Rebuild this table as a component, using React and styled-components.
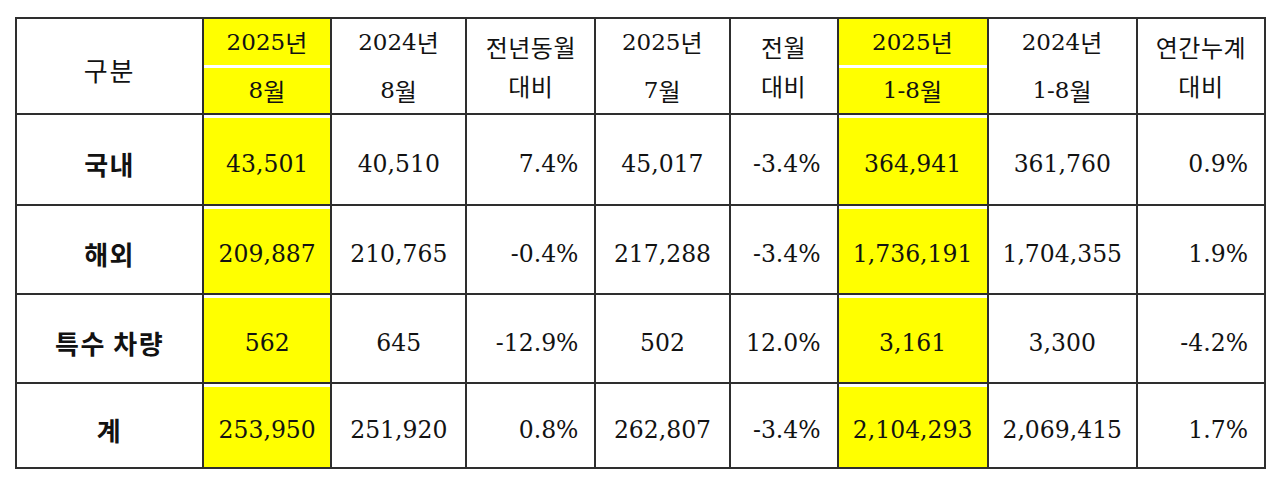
import React from 'react';
import styled, { createGlobalStyle } from 'styled-components';

const GlobalStyle = createGlobalStyle`
  html, body {
    margin: 0;
    padding: 0;
    background: #fff;
  }
  body {
    font-family: "DejaVu Serif", "Noto Sans CJK KR", serif;
    color: #121212;
  }
`;

const Page = styled.div`
  padding: 17px 0 0 15px;
`;

const Table = styled.table`
  border-collapse: separate;
  border-spacing: 0;
  table-layout: fixed;
  width: 1251px;
  border-top: 2px solid #2e2e2e;
  border-left: 2px solid #2e2e2e;
`;

const Row = styled.tr`
  height: ${(p) => p.$h}px;
`;

const HeadCell = styled.th`
  border-right: 2px solid #2e2e2e;
  border-bottom: 2px solid #2e2e2e;
  padding: 0;
  font-weight: normal;
  font-size: 23px;
  vertical-align: top;
  background: #fff;
`;

const Stack = styled.div`
  display: flex;
  flex-direction: column;
  height: 94px;
  padding: ${(p) => (p.$tight ? '10px 0 10px' : '0')};
  box-sizing: border-box;
`;

const Line = styled.div`
  flex: 1;
  display: flex;
  align-items: center;
  justify-content: center;
  background: ${(p) => (p.$hl ? '#ffff00' : 'transparent')};
  & + & {
    border-top: ${(p) => (p.$hl ? '3px solid #fff' : 'none')};
  }
`;

const Hangul = styled.span`
  font-family: "Noto Sans CJK KR", sans-serif;
  font-size: ${(p) => p.$size || 24}px;
  letter-spacing: ${(p) => p.$gap || 0.5}px;
`;

const Cell = styled.td`
  border-right: 2px solid #2e2e2e;
  border-bottom: 2px solid #2e2e2e;
  padding: ${(p) => (p.$right ? '8px 16px 0 0' : '8px 0 0')};
  text-align: ${(p) => (p.$right ? 'right' : 'center')};
  font-size: 23.5px;
  background: ${(p) => (p.$hl ? '#ffff00' : '#fff')};
  box-shadow: ${(p) => (p.$hl ? 'inset 0 3px 0 #fff' : 'none')};
`;

const Label = styled.td`
  border-right: 2px solid #2e2e2e;
  border-bottom: 2px solid #2e2e2e;
  padding: 8px 0 0;
  text-align: center;
  font-family: "Noto Sans CJK KR", sans-serif;
  font-weight: 700;
  font-size: 26px;
  letter-spacing: 1.5px;
`;

const widths = [187, 128, 135, 129, 134, 108, 150, 149, 128];

const rows = [
  { label: '국내', h: 91, v: ['43,501', '40,510', '7.4%', '45,017', '-3.4%', '364,941', '361,760', '0.9%'] },
  { label: '해외', h: 89, v: ['209,887', '210,765', '-0.4%', '217,288', '-3.4%', '1,736,191', '1,704,355', '1.9%'] },
  { label: '특수 차량', h: 89, v: ['562', '645', '-12.9%', '502', '12.0%', '3,161', '3,300', '-4.2%'] },
  { label: '계', h: 85, v: ['253,950', '251,920', '0.8%', '262,807', '-3.4%', '2,104,293', '2,069,415', '1.7%'] },
];

// columns: 0 = 8월, 1 = 작년 8월, 2 = 전년비, 3 = 7월, 4 = 전월비, 5 = 누계, 6 = 작년누계, 7 = 누계비
const highlight = [0, 5];
const rightAligned = [2, 4, 7];

const Year = ({ y }) => (
  <>
    {y}
    <Hangul>년</Hangul>
  </>
);

const Month = ({ m }) => (
  <>
    {m}
    <Hangul>월</Hangul>
  </>
);

const App = () => (
  <Page>
    <GlobalStyle />
    <Table>
      <colgroup>
        {widths.map((w, i) => (
          <col key={i} style={{ width: w }} />
        ))}
      </colgroup>
      <thead>
        <Row $h={96}>
          <HeadCell>
            <Stack>
              <Line style={{ paddingTop: 6 }}>
                <Hangul $size={26} $gap={2}>구분</Hangul>
              </Line>
            </Stack>
          </HeadCell>
          <HeadCell>
            <Stack>
              <Line $hl><Year y="2025" /></Line>
              <Line $hl><Month m="8" /></Line>
            </Stack>
          </HeadCell>
          <HeadCell>
            <Stack>
              <Line><Year y="2024" /></Line>
              <Line><Month m="8" /></Line>
            </Stack>
          </HeadCell>
          <HeadCell>
            <Stack $tight>
              <Line><Hangul>전년동월</Hangul></Line>
              <Line><Hangul>대비</Hangul></Line>
            </Stack>
          </HeadCell>
          <HeadCell>
            <Stack>
              <Line><Year y="2025" /></Line>
              <Line><Month m="7" /></Line>
            </Stack>
          </HeadCell>
          <HeadCell>
            <Stack $tight>
              <Line><Hangul>전월</Hangul></Line>
              <Line><Hangul>대비</Hangul></Line>
            </Stack>
          </HeadCell>
          <HeadCell>
            <Stack>
              <Line $hl><Year y="2025" /></Line>
              <Line $hl><Month m="1-8" /></Line>
            </Stack>
          </HeadCell>
          <HeadCell>
            <Stack>
              <Line><Year y="2024" /></Line>
              <Line><Month m="1-8" /></Line>
            </Stack>
          </HeadCell>
          <HeadCell>
            <Stack $tight>
              <Line><Hangul>연간누계</Hangul></Line>
              <Line><Hangul>대비</Hangul></Line>
            </Stack>
          </HeadCell>
        </Row>
      </thead>
      <tbody>
        {rows.map((r) => (
          <Row key={r.label} $h={r.h}>
            <Label>{r.label}</Label>
            {r.v.map((val, i) => (
              <Cell key={i} $hl={highlight.includes(i)} $right={rightAligned.includes(i)}>
                {val}
              </Cell>
            ))}
          </Row>
        ))}
      </tbody>
    </Table>
  </Page>
);

export default App;
